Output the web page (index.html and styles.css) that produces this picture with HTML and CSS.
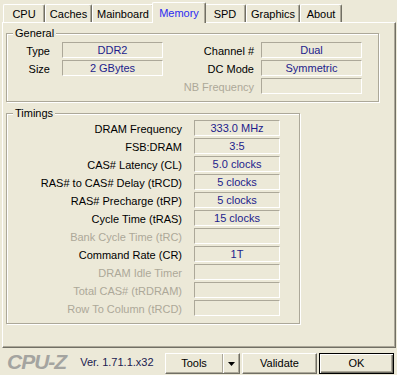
FILE: index.html
```html
<html>
<head>
    <title>CPU-Z</title>
    <link rel="stylesheet" href="styles.css">
</head>
<body>
    <div class="window">
        <div class="tabs">
            <div class="tab">CPU</div>
            <div class="tab">Caches</div>
            <div class="tab">Mainboard</div>
            <div class="tab tab-active">Memory</div>
            <div class="tab">SPD</div>
            <div class="tab">Graphics</div>
            <div class="tab">About</div>
        </div>

        <div class="panel">
            <div class="group group-general">
                <span class="group-title">General</span>
                <div class="general-grid">
                    <span class="label label-first">Type</span>
                    <span class="field">DDR2</span>
                    <span class="label label-second">Channel #</span>
                    <span class="field">Dual</span>

                    <span class="label label-first">Size</span>
                    <span class="field">2 GBytes</span>
                    <span class="label label-second">DC Mode</span>
                    <span class="field">Symmetric</span>

                    <span></span>
                    <span></span>
                    <span class="label label-second disabled">NB Frequency</span>
                    <span class="field"></span>
                </div>
            </div>

            <div class="group group-timings">
                <span class="group-title">Timings</span>
                <div class="timings-grid">
                    <span class="label">DRAM Frequency</span>
                    <span class="field">333.0 MHz</span>
                    <span class="label">FSB:DRAM</span>
                    <span class="field">3:5</span>
                    <span class="label">CAS# Latency (CL)</span>
                    <span class="field">5.0 clocks</span>
                    <span class="label">RAS# to CAS# Delay (tRCD)</span>
                    <span class="field">5 clocks</span>
                    <span class="label">RAS# Precharge (tRP)</span>
                    <span class="field">5 clocks</span>
                    <span class="label">Cycle Time (tRAS)</span>
                    <span class="field">15 clocks</span>
                    <span class="label disabled">Bank Cycle Time (tRC)</span>
                    <span class="field"></span>
                    <span class="label">Command Rate (CR)</span>
                    <span class="field">1T</span>
                    <span class="label disabled">DRAM Idle Timer</span>
                    <span class="field"></span>
                    <span class="label disabled">Total CAS# (tRDRAM)</span>
                    <span class="field"></span>
                    <span class="label disabled">Row To Column (tRCD)</span>
                    <span class="field"></span>
                </div>
            </div>
        </div>

        <div class="footer">
            <span class="logo">CPU-Z</span>
            <span class="version">Ver. 1.71.1.x32</span>
            <div class="buttons">
                <div class="button tools">
                    <span class="tools-main">Tools</span>
                    <span class="tools-arrow">
                        <svg width="7" height="4" viewBox="0 0 7 4"><path d="M0 0h7L3.5 4z" fill="#000"/></svg>
                    </span>
                </div>
                <div class="button">Validate</div>
                <div class="button button-default">OK</div>
            </div>
        </div>
    </div>
</body>
</html>
```

FILE: styles.css
```css
body {
    margin: 0;
    background-color: #ece9d8;
    font-family: "Liberation Sans", Arial, sans-serif;
    font-size: 11px;
    color: #000;
}

.window {
    width: 397px;
    height: 375px;
}

/* tab strip */
.tabs {
    display: grid;
    grid-template-columns: 42px 47px 62px 50px 42px 54px 42px;
    align-items: end;
    height: 20px;
    padding: 2px 0 0 3px;
}

.tab {
    height: 18px;
    box-sizing: border-box;
    padding-top: 1px;
    border: 1px solid #fff;
    border-bottom: none;
    border-right-color: #716f64;
    border-radius: 2px 2px 0 0;
    box-shadow: inset -1px 0 0 #aca899;
    background-color: #ece9d8;
    text-align: center;
    line-height: 16px;
    white-space: nowrap;
}

.tab-active {
    position: relative;
    z-index: 1;
    height: 21px;
    margin: 0 -2px -1px;
    padding-top: 2px;
    color: #2b2bf0;
}

.panel {
    width: 394px;
    height: 326px;
    box-sizing: border-box;
    margin-left: 2px;
    padding-left: 3px;
    border: 1px solid #fff;
    border-right-color: #716f64;
    border-bottom-color: #716f64;
    box-shadow: inset -1px -1px 0 #aca899;
}

/* etched group boxes */
.group {
    position: relative;
    box-sizing: border-box;
    border: 1px solid #aca899;
    box-shadow: inset 1px 1px 0 #fff, 1px 1px 0 #fff;
}

.group-title {
    position: absolute;
    top: -7px;
    left: 6px;
    padding: 0 2px;
    line-height: 13px;
    background-color: #ece9d8;
}

.group-general {
    width: 373px;
    margin-top: 10px;
}

.group-timings {
    width: 294px;
    margin-top: 11px;
}

.general-grid {
    display: grid;
    grid-template-columns: 55px 101px 98px 101px;
    row-gap: 2px;
    padding: 8px 0 7px;
}

.timings-grid {
    display: grid;
    grid-template-columns: 187px 86px;
    row-gap: 2px;
    padding: 6px 0 7px;
}

.label {
    height: 16px;
    padding-top: 1px;
    box-sizing: border-box;
    padding-right: 12px;
    line-height: 16px;
    text-align: right;
    white-space: nowrap;
}

.label-second {
    padding-right: 7px;
}

.disabled {
    color: #aca899;
}

.field {
    height: 16px;
    box-sizing: border-box;
    border: 1px solid #fff;
    border-top-color: #aca899;
    border-left-color: #aca899;
    line-height: 14px;
    text-align: center;
    color: #1c1c8c;
    white-space: nowrap;
}

/* bottom bar */
.footer {
    display: flex;
    align-items: center;
    height: 27px;
    padding: 0 3px 0 7px;
}

.logo {
    font-size: 21px;
    font-weight: bold;
    font-style: italic;
    letter-spacing: -1px;
    color: #a4a4a0;
}

.version {
    margin-left: 14px;
    color: #202050;
}

.buttons {
    display: flex;
    gap: 2px;
    margin-left: auto;
    align-self: flex-start;
    margin-top: 5px;
}

.button {
    width: 75px;
    height: 21px;
    box-sizing: border-box;
    border: 1px solid #fff;
    border-right-color: #716f64;
    border-bottom-color: #716f64;
    box-shadow: inset -1px -1px 0 #aca899;
    line-height: 19px;
    text-align: center;
}

.button-default {
    border-color: #000;
    box-shadow: inset 1px 1px 0 #fff, inset -1px -1px 0 #716f64, inset -2px -2px 0 #aca899;
}

.tools {
    display: flex;
}

.tools-main {
    flex: 1;
}

.tools-arrow {
    display: flex;
    align-items: center;
    justify-content: center;
    width: 16px;
    border-left: 1px solid #aca899;
    box-shadow: inset 1px 0 0 #fff;
}
```
